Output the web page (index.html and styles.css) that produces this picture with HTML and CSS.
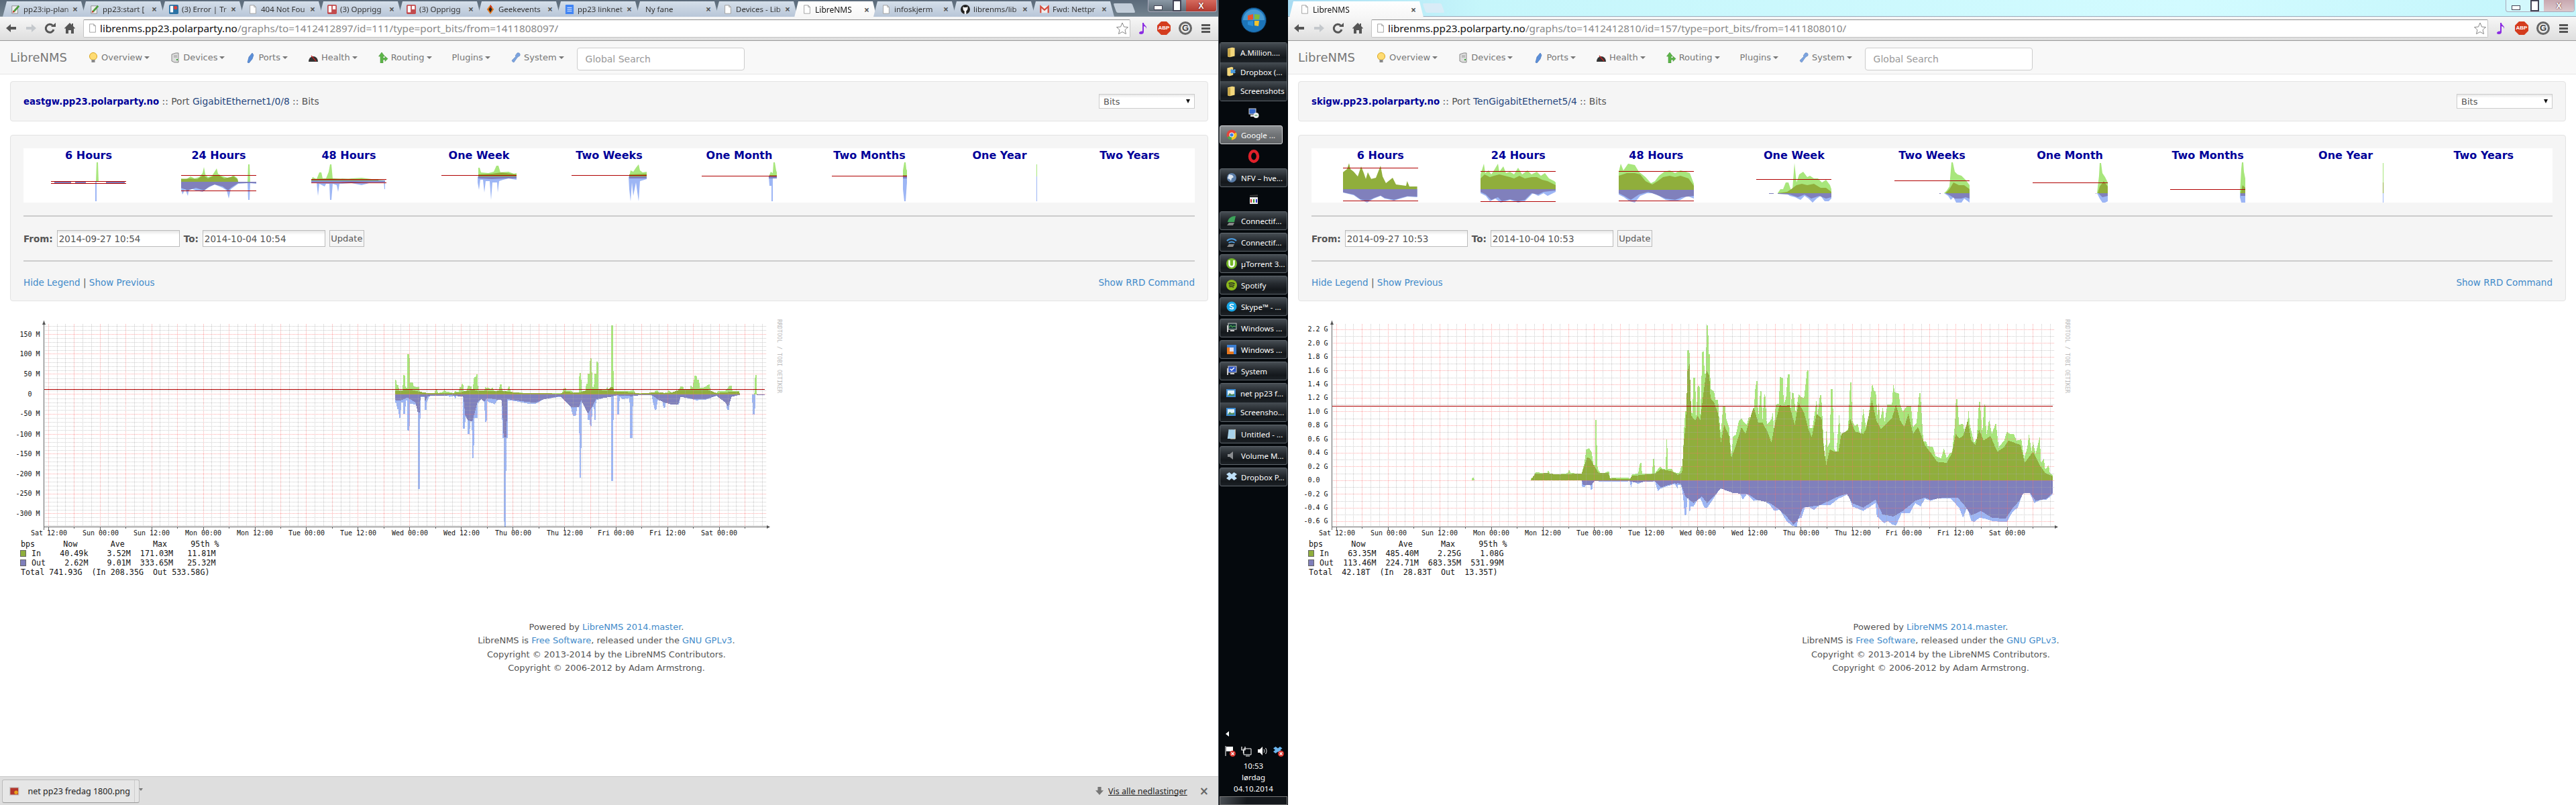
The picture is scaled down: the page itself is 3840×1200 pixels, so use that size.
FILE: index.html
```html
<!DOCTYPE html>
<html>
<head>
    <title>LibreNMS</title>
    <meta charset="utf-8">
    <link rel="stylesheet" href="styles.css">
</head>
<body>
<svg class="defs" width="0" height="0">
    <defs>
        <symbol id="i-page" viewBox="0 0 16 16"><path d="M3 1h7l3 3v11H3z" fill="#fff" stroke="#999"/><path d="M10 1v3h3" fill="none" stroke="#999"/></symbol>
        <symbol id="i-wiki" viewBox="0 0 16 16"><path d="M2 2h10v13H2z" fill="#eee" stroke="#888"/><path d="M5 12L14 2" stroke="#4d9c3c" stroke-width="3"/><path d="M3 14l1-4 3 2z" fill="#c8352b"/></symbol>
        <symbol id="i-trello" viewBox="0 0 16 16"><rect width="16" height="16" rx="2" fill="#2c72a4"/><rect x="2" y="2" width="5" height="11" fill="#fff"/><circle cx="11" cy="5" r="3" fill="#d9413a"/></symbol>
        <symbol id="i-trellored" viewBox="0 0 16 16"><rect width="16" height="16" rx="2" fill="#c24a4d"/><rect x="2" y="2" width="5" height="11" fill="#fff"/><rect x="9" y="2" width="5" height="6" fill="#fff"/></symbol>
        <symbol id="i-geek" viewBox="0 0 16 16"><path d="M8 0l6 8-6 8-6-8z" fill="#e8791c"/><path d="M8 3l3 5-3 5-3-5z" fill="#222"/><path d="M8 0l3 4-3 2z" fill="#c8281e"/></symbol>
        <symbol id="i-gdoc" viewBox="0 0 16 16"><rect x="1" width="14" height="16" rx="1" fill="#4285f4"/><path d="M4 5h8M4 8h8M4 11h8" stroke="#fff"/></symbol>
        <symbol id="i-github" viewBox="0 0 16 16"><circle cx="8" cy="8" r="8" fill="#222"/><path d="M4 3l2 1.500h4L12 3v4.500L10.500 10l-1 .5V16h-3v-5.500L5 10 4 7.500z" fill="#fff"/></symbol>
        <symbol id="i-gmail" viewBox="0 0 16 16"><path d="M1 2h14v12H1z" fill="#eee"/><path d="M1.500 14V3l6.500 6 6.500-6v11" fill="none" stroke="#d64a3b" stroke-width="2.500"/></symbol>

        <symbol id="i-back" viewBox="0 0 18 18"><path d="M16 7H8V3L1 9l7 6v-4h8z" fill="#555"/></symbol>
        <symbol id="i-fwd" viewBox="0 0 18 18"><path d="M2 7h8V3l7 6-7 6v-4H2z" fill="#c4c8cc"/></symbol>
        <symbol id="i-reload" viewBox="0 0 18 18"><path d="M14 11a6 6 0 1 1-1.500-6" fill="none" stroke="#555" stroke-width="3"/><path d="M10 7h7V1z" fill="#555"/></symbol>
        <symbol id="i-home" viewBox="0 0 18 18"><path d="M9 1L1 9l1 1 1-1v8h4v-5h4v5h4V9l1 1 1-1-3-3V2h-2v2z" fill="#555"/></symbol>
        <symbol id="i-star" viewBox="0 0 18 18"><path d="M9 1l2.500 6 6 .500-4.500 4 1.500 6L9 14.500 3.500 17.500 5 11.500.5 7.500l6-.5z" fill="#fff" stroke="#888"/></symbol>
        <symbol id="i-note" viewBox="0 0 18 18"><path d="M8 1h2c0 4 5 4 4 9-.5-3-2-3.500-4-4v9c0 2-2 3-4 3s-3-1-3-2 2-3 5-2.500z" fill="#8a2be2"/></symbol>

        <symbol id="i-bulb" viewBox="0 0 16 16"><circle cx="8" cy="6" r="5.500" fill="#ffdc73" stroke="#d9a520"/><rect x="5.500" y="11" width="5" height="4" fill="#888"/></symbol>
        <symbol id="i-server" viewBox="0 0 16 16"><path d="M3 3l6-2h4v14H7l-4-2z" fill="#ddd" stroke="#888"/><path d="M6 5h5M6 7h5" stroke="#999"/><rect x="10" y="10" width="2" height="2" fill="#3a3"/></symbol>
        <symbol id="i-plug" viewBox="0 0 16 16"><path d="M4 15L6 7l5-6 2 3-2 6-5 6z" fill="#5b8fd9" stroke="#3e6cb0" stroke-width=".6"/></symbol>
        <symbol id="i-health" viewBox="0 0 16 16"><path d="M1 14a7 8 0 0 1 14 0z" fill="#333"/><path d="M5 5l7 8" stroke="#c22" stroke-width="1.200"/></symbol>
        <symbol id="i-route" viewBox="0 0 16 16"><path d="M6 0L1.500 6H4v10h4v-5h3v2.500L15 9.500 11 6v2.500H8V6h2.500z" fill="#5cb548" stroke="#3c8a2c" stroke-width=".5"/></symbol>
        <symbol id="i-wrench" viewBox="0 0 16 16"><path d="M10 1c3-1 5 1 4 4l-3 2-1 1-5 7-2-1-1-2 6-6-1-1z" fill="#7ba3de" stroke="#5a7fb8" stroke-width=".5"/></symbol>

        <symbol id="t-folder" viewBox="0 0 16 20"><path d="M2 3l8-2 5 1v15l-9 2-4-1z" fill="#f3d77c"/><path d="M2 3l5 1v15l-5-2z" fill="#c9a84a"/></symbol>
        <symbol id="t-dropfolder" viewBox="0 0 16 20"><path d="M1 3l8-2 3 1v14l-7 2-4-1z" fill="#f3d77c"/><path d="M9 5l3 2 3-2 2 2-2 2 2 2-3 2-2-1-3 1-2-2 1-2-1-2z" fill="#4a9be0"/></symbol>
        <symbol id="t-remote" viewBox="0 0 16 16"><rect x="1" y="1" width="10" height="8" fill="#3467c8" stroke="#ccc"/><path d="M3 10h6v3H3z" fill="#ccc"/><circle cx="11.500" cy="11" r="4" fill="#eee"/><path d="M9.500 11h4" stroke="#393"/></symbol>
        <symbol id="t-chrome" viewBox="0 0 16 16"><circle cx="8" cy="8" r="7.500" fill="#e5443a"/><path d="M8 8L1.500 11.500A7.500 7.500 0 0 0 8 15.500z" fill="#4aa84e"/><path d="M8 8v7.500a7.500 7.500 0 0 0 6.800-11z" fill="#f5c51e"/><circle cx="8" cy="8" r="3.500" fill="#fff"/><circle cx="8" cy="8" r="2.600" fill="#3d7fe6"/></symbol>
        <symbol id="t-opera" viewBox="0 0 16 20"><ellipse cx="8" cy="10" rx="5.500" ry="7" fill="none" stroke="#e0202a" stroke-width="4"/></symbol>
        <symbol id="t-globe" viewBox="0 0 16 16"><circle cx="8" cy="8" r="7" fill="#5a7da8"/><path d="M4 3l5 1 2 3-3 2-1 4-2-3-3-1z" fill="#dde6f0"/></symbol>
        <symbol id="t-clap" viewBox="0 0 16 16"><rect x="2" y="5" width="12" height="10" fill="#eee"/><path d="M2 2l12-1v3H2z" fill="#333"/><path d="M4 8v5" stroke="#c33" stroke-width="2"/><path d="M8 8v5" stroke="#393" stroke-width="2"/><path d="M12 8v5" stroke="#33c" stroke-width="2"/></symbol>
        <symbol id="t-fan" viewBox="0 0 16 16"><path d="M2 10C3 4 8 1 14 1l-2 9z" fill="#3da35a"/><path d="M1 15l3-4h8l-2 4z" fill="#888"/></symbol>
        <symbol id="t-wifi" viewBox="0 0 16 16"><path d="M1 6c4-4 10-4 14 0M3.500 9c3-2 6-2 9 0" fill="none" stroke="#4a9be0" stroke-width="2"/><path d="M1 15l3-4h8l-2 4z" fill="#888"/></symbol>
        <symbol id="t-utorrent" viewBox="0 0 16 16"><circle cx="8" cy="8" r="8" fill="#76b82a"/><path d="M4.500 3v6a3.500 3.500 0 0 0 7 0V3" fill="none" stroke="#fff" stroke-width="2.500"/></symbol>
        <symbol id="t-spotify" viewBox="0 0 16 16"><circle cx="8" cy="8" r="8" fill="#8cb81c"/><path d="M3.500 5.500c3-1 6-1 9 .5M4 8c3-.8 5-.6 8 .5M4.500 10.500c2-.5 4.500-.4 6.500.5" fill="none" stroke="#222" stroke-width="1.400"/></symbol>
        <symbol id="t-skype" viewBox="0 0 16 16"><circle cx="8" cy="8" r="7.500" fill="#1aa8e8"/><path d="M11 5.500C10 4 6 4 5.500 6c-.5 2.500 5 1.500 5 4 0 2-4.500 2-5.500 0" fill="none" stroke="#fff" stroke-width="1.600"/></symbol>
        <symbol id="t-monitor" viewBox="0 0 16 16"><rect x="3" y="1" width="12" height="9" fill="#1a3a3a" stroke="#ccc"/><path d="M4 7l3-3 2 3 2-2 3 1" fill="none" stroke="#5c5"/><path d="M6 11h6v2H6zM1 4h2v10H1z" fill="#ccc"/></symbol>
        <symbol id="t-vm" viewBox="0 0 16 16"><rect x="1" y="1" width="14" height="14" fill="#3c7ed0"/><rect x="1" y="5" width="10" height="10" fill="#e8781e"/><rect x="5" y="5" width="6" height="6" fill="#dde"/></symbol>
        <symbol id="t-system" viewBox="0 0 16 16"><rect x="3" y="1" width="12" height="9" fill="#2c55c8" stroke="#ccc"/><path d="M6 5l2 2 4-4" fill="none" stroke="#fff" stroke-width="1.500"/><path d="M6 11h6v2H6zM1 4h2v10H1z" fill="#ccc"/></symbol>
        <symbol id="t-image" viewBox="0 0 16 16"><rect x="1" y="2" width="14" height="12" fill="#3c8ad0"/><rect x="3" y="4" width="10" height="8" fill="#dff0f8"/><path d="M3 12l3-4 3 2 4-1v3z" fill="#4c8a5a"/></symbol>
        <symbol id="t-notepad" viewBox="0 0 16 18"><path d="M3 1h11v16H1z" fill="#a9d3ea"/><path d="M4 1h10" stroke="#555" stroke-dasharray="1 1" stroke-width="2"/><path d="M14 1v16H6" fill="none" stroke="#e6d9b8"/></symbol>
        <symbol id="t-speaker" viewBox="0 0 16 16"><path d="M2 6h3l5-4v12l-5-4H2z" fill="#8a8d90"/></symbol>
        <symbol id="t-dropbox" viewBox="0 0 16 16"><path d="M4.500 1L0 4l3.500 3L0 10l4.500 3L8 10l3.500 3 4.500-3-3.500-3L16 4l-4.500-3L8 4z" fill="#bfe0f8"/></symbol>
        <symbol id="t-flag" viewBox="0 0 16 16"><path d="M1 0v15" stroke="#fff"/><path d="M2 1h10v7H2z" fill="#fff"/><circle cx="11.500" cy="11.500" r="4.500" fill="#d9332b"/><path d="M9.500 9.500l4 4m0-4l-4 4" stroke="#fff" stroke-width="1.200"/></symbol>
        <symbol id="t-net" viewBox="0 0 16 16"><path d="M4 4h11v9H4z" fill="none" stroke="#fff"/><path d="M7 15h6" stroke="#fff"/><path d="M1 1v5h5V1M3.500 6v5" fill="none" stroke="#fff" stroke-width="1.200"/></symbol>
        <symbol id="t-vol" viewBox="0 0 16 16"><path d="M1 5h3l4-4v13l-4-4H1z" fill="#fff"/><path d="M10 5c1 2 1 3 0 5M12.500 3c2 3 2 6 0 9" fill="none" stroke="#fff"/></symbol>
        <symbol id="t-dropx" viewBox="0 0 16 16"><path d="M3.500 1L0 3.500l3 2.500-3 2.500L3.500 11 7 8.500 10 11l3.500-2.500-3-2.500 3-2.500L10 1 7 3.500z" fill="#6cb6ee"/><circle cx="11.500" cy="11.500" r="4.500" fill="#d9332b"/><path d="M9.500 9.500l4 4m0-4l-4 4" stroke="#fff" stroke-width="1.200"/></symbol>

        <g id="rrd-vgrid">
            <path class="grid-minor" d="M85.500 483v302M97.500 483v302M123.500 483v302M136.500 483v302M161.500 483v302M174.500 483v302M200.500 483v302M213.500 483v302M238.500 483v302M251.500 483v302M277.500 483v302M290.500 483v302M315.500 483v302M328.500 483v302M354.500 483v302M367.500 483v302M392.500 483v302M405.500 483v302M431.500 483v302M444.500 483v302M469.500 483v302M482.500 483v302M508.500 483v302M521.500 483v302M546.500 483v302M559.500 483v302M585.500 483v302M597.500 483v302M623.500 483v302M636.500 483v302M662.500 483v302M674.500 483v302M700.500 483v302M713.500 483v302M739.500 483v302M751.500 483v302M777.500 483v302M790.500 483v302M815.500 483v302M828.500 483v302M854.500 483v302M867.500 483v302M892.500 483v302M905.500 483v302M931.500 483v302M944.500 483v302M969.500 483v302M982.500 483v302M1008.500 483v302M1021.500 483v302M1046.500 483v302M1059.500 483v302M1085.500 483v302M1097.500 483v302M1123.500 483v302M1136.500 483v302"/>
            <path class="grid-major" d="M72.500 483v302M110.500 483v302M149.500 483v302M187.500 483v302M226.500 483v302M264.500 483v302M303.500 483v302M341.500 483v302M380.500 483v302M418.500 483v302M456.500 483v302M495.500 483v302M533.500 483v302M572.500 483v302M610.500 483v302M649.500 483v302M687.500 483v302M726.500 483v302M764.500 483v302M803.500 483v302M841.500 483v302M880.500 483v302M918.500 483v302M956.500 483v302M995.500 483v302M1033.500 483v302M1072.500 483v302M1110.500 483v302"/>
        </g>
        <g id="rrd-xaxis">
            <path class="axis" d="M65.500 478v312M65 785.500h1078M72.500 785v5M110.500 785v3M149.500 785v5M187.500 785v3M226.500 785v5M264.500 785v3M303.500 785v5M341.500 785v3M380.500 785v5M418.500 785v3M456.500 785v5M495.500 785v3M533.500 785v5M572.500 785v3M610.500 785v5M649.500 785v3M687.500 785v5M726.500 785v3M764.500 785v5M803.500 785v3M841.500 785v5M880.500 785v3M918.500 785v5M956.500 785v3M995.500 785v5M1033.500 785v3M1072.500 785v5M1110.500 785v3"/>
            <path class="arrow" d="M63 484l2.500-6 2.500 6zM1143 783l5 2.500-5 2.500z"/>
        </g>
    </defs>
</svg>

<!-- venstre vindu -->
<section class="window left">
    <div class="strip">
        <div class="tab"><svg class="fav"><use href="#i-wiki"/></svg><span class="tab-title">pp23:ip-plan</span><i class="tab-x">×</i></div>
        <div class="tab"><svg class="fav"><use href="#i-wiki"/></svg><span class="tab-title">pp23:start [</span><i class="tab-x">×</i></div>
        <div class="tab"><svg class="fav"><use href="#i-trello"/></svg><span class="tab-title">(3) Error | Tr</span><i class="tab-x">×</i></div>
        <div class="tab"><svg class="fav"><use href="#i-page"/></svg><span class="tab-title">404 Not Fou</span><i class="tab-x">×</i></div>
        <div class="tab"><svg class="fav"><use href="#i-trellored"/></svg><span class="tab-title">(3) Opprigg</span><i class="tab-x">×</i></div>
        <div class="tab"><svg class="fav"><use href="#i-trellored"/></svg><span class="tab-title">(3) Opprigg</span><i class="tab-x">×</i></div>
        <div class="tab"><svg class="fav"><use href="#i-geek"/></svg><span class="tab-title">Geekevents</span><i class="tab-x">×</i></div>
        <div class="tab"><svg class="fav"><use href="#i-gdoc"/></svg><span class="tab-title">pp23 linknet</span><i class="tab-x">×</i></div>
        <div class="tab no-icon"><span class="tab-title">Ny fane</span><i class="tab-x">×</i></div>
        <div class="tab"><svg class="fav"><use href="#i-page"/></svg><span class="tab-title">Devices - Lib</span><i class="tab-x">×</i></div>
        <div class="tab active"><svg class="fav"><use href="#i-page"/></svg><span class="tab-title">LibreNMS</span><i class="tab-x">×</i></div>
        <div class="tab"><svg class="fav"><use href="#i-page"/></svg><span class="tab-title">infoskjerm</span><i class="tab-x">×</i></div>
        <div class="tab"><svg class="fav"><use href="#i-github"/></svg><span class="tab-title">librenms/lib</span><i class="tab-x">×</i></div>
        <div class="tab"><svg class="fav"><use href="#i-gmail"/></svg><span class="tab-title">Fwd: Nettpr</span><i class="tab-x">×</i></div>
        <div class="new-tab"></div>
        <div class="win-ctl"><span class="ctl-min"></span><span class="ctl-max"></span><span class="ctl-close">X</span></div>
    </div>
    <div class="toolbar">
        <svg class="tool"><use href="#i-back"/></svg>
        <svg class="tool"><use href="#i-fwd"/></svg>
        <svg class="tool"><use href="#i-reload"/></svg>
        <svg class="tool"><use href="#i-home"/></svg>
        <div class="omnibox">
            <svg class="fav"><use href="#i-page"/></svg>
            <span class="url"><b>librenms.pp23.polarparty.no</b>/graphs/to=1412412897/id=111/type=port_bits/from=1411808097/</span>
            <svg class="star"><use href="#i-star"/></svg>
        </div>
        <div class="ext">
            <svg class="tool"><use href="#i-note"/></svg>
            <span class="abp">ABP</span>
            <span class="gee">G</span>
            <span class="menu"></span>
        </div>
    </div>
    <main class="page">
        <nav class="navbar">
            <span class="brand">LibreNMS</span>
            <span class="nav-item"><svg class="nav-icon"><use href="#i-bulb"/></svg>Overview<i class="caret"></i></span>
            <span class="nav-item"><svg class="nav-icon"><use href="#i-server"/></svg>Devices<i class="caret"></i></span>
            <span class="nav-item"><svg class="nav-icon"><use href="#i-plug"/></svg>Ports<i class="caret"></i></span>
            <span class="nav-item"><svg class="nav-icon"><use href="#i-health"/></svg>Health<i class="caret"></i></span>
            <span class="nav-item"><svg class="nav-icon"><use href="#i-route"/></svg>Routing<i class="caret"></i></span>
            <span class="nav-item">Plugins<i class="caret"></i></span>
            <span class="nav-item"><svg class="nav-icon"><use href="#i-wrench"/></svg>System<i class="caret"></i></span>
            <div class="search">Global Search</div>
        </nav>
        <div class="panel heading">
            <div><a class="host">eastgw.pp23.polarparty.no</a> :: Port <a class="iface">GigabitEthernet1/0/8</a> :: Bits</div>
            <div class="select">Bits<i class="select-arrow"></i></div>
        </div>
        <div class="panel controls">
            <div class="thumbs">
                <div class="thumb"><a>6 Hours</a>
                    <svg class="spark" viewBox="0 0 112 60"><path class="in-max" d="M67 29L68 0H70L71 29z"/><path class="out-max" d="M66 29V58H68V29z"/><path class="out-avg" d="M5 29V32H30V29zM36 29V31H52V29zM82 29V32H110V29z"/><path class="pct" d="M0 28H112M0 31H112"/></svg></div>
                <div class="thumb"><a>24 Hours</a>
                    <svg class="spark" viewBox="0 0 112 60"><path class="in-max" d="M0 29V24L8 25 14 21 20 24 27 22 32 16 34 7 36 18 40 22 46 20 50 14 53 9 55 17 60 20 66 22 72 24 78 19 84 24 85 29zM99 29L100 3H102L103 29z"/><path class="in-avg" d="M0 29V25L14 24 24 25 33 19 40 24 50 19 56 19 64 24 78 21 84 25 85 29z"/><path class="out-max" d="M0 29V40L2 48 6 40 10 50 12 38 22 42 32 44 40 38 50 33 62 38 68 42 71 54 74 40 85 32 99 31 100 56H102L103 31 112 32V29z"/><path class="out-avg" d="M0 29V38L10 42 22 38 34 42 42 36 50 33 62 36 70 42 74 38 85 31 112 31V29z"/><path class="pct" d="M0 19H112M0 42H112"/></svg></div>
                <div class="thumb"><a>48 Hours</a>
                    <svg class="spark" viewBox="0 0 112 60"><path class="in-max" d="M0 27L2 22 8 25 12 15 15 15 17 24 22 24 26 14 28 3 30 3 32 25 50 26 60 24 75 23 90 25 110 27z"/><path class="in-avg" d="M0 27V25L30 24 70 25 100 26 100 27z"/><path class="out-max" d="M0 27V30L8 30 10 50 12 32 20 36 22 32 27 32 28 56 30 56 32 32 38 34 40 44 42 32 60 31 75 34 90 30 108 30V27zM108 27L109 40H110V27z"/><path class="out-avg" d="M0 27V29H40L60 30 90 29 110 29V27z"/><path class="pct" d="M0 25H112M0 30H112"/></svg></div>
                <div class="thumb"><a>One Week</a>
                    <svg class="spark" viewBox="0 0 112 60"><path class="in-max" d="M55 21V8H57L59 15 70 16 78 14 82 5H85L88 15 100 14 108 17 112 16V21z"/><path class="in-avg" d="M55 21V18L75 17 90 15 112 18V21z"/><path class="out-max" d="M54 21V30L56 41 58 26 62 26 64 45 66 28 72 28 74 56 76 30 83 30 84 45 86 28 92 26 100 24 112 26V21z"/><path class="out-avg" d="M55 21V24L75 25 100 24 112 24V21z"/><path class="pct" d="M0 19H112"/></svg></div>
                <div class="thumb"><a>Two Weeks</a>
                    <svg class="spark" viewBox="0 0 112 60"><path class="in-max" d="M86 21L88 12 92 14 96 8 100 3 102 12 106 15 112 14V21z"/><path class="in-avg" d="M86 21V18L112 17V21z"/><path class="out-max" d="M85 21L86 40 88 58 90 30 92 50 96 30 100 58 102 28 112 25V21z"/><path class="out-avg" d="M86 21V24H112V21z"/><path class="pct" d="M0 19H112"/></svg></div>
                <div class="thumb"><a>One Month</a>
                    <svg class="spark" viewBox="0 0 112 60"><path class="in-max" d="M100 21L103 14 106 16 107 0H109L111 12 112 15V21z"/><path class="in-avg" d="M101 21V19H112V21z"/><path class="out-max" d="M100 21L101 35 104 35V58H106V48 108 48 110 40 112 25V21z"/><path class="out-avg" d="M100 21V24H112V21z"/><path class="pct" d="M0 20H112"/></svg></div>
                <div class="thumb"><a>Two Months</a>
                    <svg class="spark" viewBox="0 0 112 60"><path class="in-max" d="M106 21V12L108 0H110L111 10 112 12V21z"/><path class="in-avg" d="M106 21V19H112V21z"/><path class="out-max" d="M106 21V40L108 58H110L112 30V21z"/><path class="out-avg" d="M106 21V24H112V21z"/><path class="pct" d="M0 20H112"/></svg></div>
                <div class="thumb"><a>One Year</a>
                    <svg class="spark" viewBox="0 0 112 60"><path class="in-max" d="M111 21V3H112V21z"/><path class="out-max" d="M111 21V58H112V21z"/></svg></div>
                <div class="thumb"><a>Two Years</a></div>
            </div>
            <hr>
            <form class="range">
                <label>From:</label><input class="date" value="2014-09-27 10:54">
                <label>To:</label><input class="date" value="2014-10-04 10:54">
                <span class="update">Update</span>
            </form>
            <hr>
            <div class="links">
                <span><a>Hide Legend</a> | <a>Show Previous</a></span>
                <a>Show RRD Command</a>
            </div>
        </div>
        <svg class="rrd" viewBox="0 470 1180 400">
            <g class="areas" transform="translate(550 460) scale(.408 .3333)">
                <polygon class="in-max" points="95,383 95,318 101,322 101,340 108,342 111,372 123,372 125,298 131,298 134,355 140,355 140,203 148,203 150,330 160,330 162,345 172,352 182,348 186,372 215,378 240,378 243,362 250,362 252,378 272,372 275,356 280,370 310,378 314,370 328,372 332,352 338,352 340,336 344,336 346,372 358,372 360,345 374,347 378,372 384,308 390,306 393,293 397,293 399,370 422,370 424,352 436,354 446,360 452,352 458,370 475,370 478,340 485,340 488,370 505,370 510,347 514,347 517,372 545,376 600,378 660,380 705,378 712,356 718,355 722,365 742,368 748,378 766,378 769,287 775,287 777,370 790,370 794,335 798,335 800,290 806,290 808,222 814,222 816,350 822,350 824,292 830,290 832,238 837,238 838,360 868,360 870,348 876,360 884,360 886,76 892,76 894,368 930,368 950,370 965,364 975,378 1000,378 1040,380 1048,365 1055,365 1060,378 1090,376 1095,365 1105,375 1130,372 1138,349 1148,349 1152,368 1172,368 1176,340 1182,355 1190,300 1197,300 1200,318 1206,318 1209,355 1225,352 1240,340 1245,340 1248,372 1270,378 1275,368 1300,370 1318,345 1325,345 1328,370 1352,370 1356,383 1408,383 1411,298 1416,298 1418,383"/>
                <polygon class="in-avg" points="95,383 97,365 125,365 130,360 150,362 185,372 215,378 275,378 330,376 360,366 380,362 395,368 420,366 450,370 480,366 510,372 560,378 700,380 715,370 745,375 770,376 800,362 830,360 868,368 886,350 892,350 896,372 960,374 990,380 1050,374 1090,378 1110,374 1135,362 1180,362 1210,360 1235,362 1270,378 1300,374 1352,372 1356,383"/>
                <polygon class="out-max" points="95,383 95,420 100,422 103,450 108,450 110,488 115,488 118,420 124,420 126,470 132,470 135,410 140,410 141,545 148,545 150,425 172,430 178,460 180,460 180,808 186,808 188,395 203,395 203,452 210,452 212,420 220,390 240,388 280,385 296,395 310,390 316,404 320,390 344,395 344,538 351,538 354,420 360,420 360,562 368,562 370,505 376,505 377,668 383,668 385,488 396,488 398,425 410,405 422,420 424,508 430,508 432,415 460,428 472,405 485,410 488,578 492,578 494,975 500,975 502,578 507,578 508,410 540,415 580,425 610,425 640,405 700,395 730,400 745,480 756,480 762,432 768,432 769,755 775,755 777,420 797,420 799,498 806,498 808,525 814,525 816,440 822,440 824,498 828,498 830,410 884,390 884,772 892,772 894,388 907,390 908,473 914,473 916,392 925,405 952,400 954,578 963,578 965,390 1000,385 1032,385 1044,452 1050,452 1056,405 1072,412 1076,443 1082,443 1088,400 1105,400 1107,430 1133,428 1138,395 1180,405 1195,410 1230,408 1270,390 1305,420 1308,452 1316,452 1320,395 1356,385 1400,385 1402,473 1410,473 1412,385 1445,388 1445,383"/>
                <polygon class="out-avg" points="95,383 97,410 118,410 140,398 170,420 178,462 186,465 188,392 203,392 205,415 215,392 300,388 345,395 352,480 362,500 378,505 396,420 410,405 422,415 432,400 485,410 488,460 492,575 502,575 506,405 580,418 610,420 640,405 700,392 738,440 768,440 775,410 800,470 815,440 830,405 884,395 890,392 905,388 960,392 1000,386 1032,386 1060,410 1080,420 1108,430 1130,428 1138,395 1190,405 1230,405 1270,390 1300,418 1312,440 1325,395 1356,385 1400,384 1445,388 1445,383"/>
            </g>
            <use href="#rrd-vgrid"/>
            <path class="grid-minor" d="M65 486.500h1078M65 492.500h1078M65 504.500h1078M65 510.500h1078M65 516.500h1078M65 522.500h1078M65 534.500h1078M65 540.500h1078M65 546.500h1078M65 552.500h1078M65 564.500h1078M65 570.500h1078M65 576.500h1078M65 582.500h1078M65 594.500h1078M65 600.500h1078M65 605.500h1078M65 611.500h1078M65 623.500h1078M65 629.500h1078M65 635.500h1078M65 641.500h1078M65 653.500h1078M65 659.500h1078M65 665.500h1078M65 671.500h1078M65 682.500h1078M65 688.500h1078M65 694.500h1078M65 700.500h1078M65 712.500h1078M65 718.500h1078M65 724.500h1078M65 730.500h1078M65 742.500h1078M65 748.500h1078M65 754.500h1078M65 760.500h1078M65 771.500h1078M65 777.500h1078M65 783.500h1078"/>
            <path class="grid-major" d="M65 498.500h1078M65 527.500h1078M65 557.500h1078M65 587.500h1078M65 617.500h1078M65 647.500h1078M65 676.500h1078M65 706.500h1078M65 736.500h1078M65 765.500h1078"/>
            <path class="pct" d="M65 580.500H1140"/>
            <use href="#rrd-xaxis"/>
            <g class="rrd-y">
                <text x="59.500" y="501.500">150 M</text><text x="59.500" y="530.500">100 M</text><text x="59.500" y="561">50 M</text><text x="59.500" y="590.500">0  </text><text x="59.500" y="620">-50 M</text><text x="59.500" y="650.500">-100 M</text><text x="59.500" y="680">-150 M</text><text x="59.500" y="709.500">-200 M</text><text x="59.500" y="739">-250 M</text><text x="59.500" y="769">-300 M</text>
            </g>
            <g class="rrd-x">
                <text x="73" y="798">Sat 12:00</text><text x="150" y="798">Sun 00:00</text><text x="226" y="798">Sun 12:00</text><text x="303" y="798">Mon 00:00</text><text x="380" y="798">Mon 12:00</text><text x="457" y="798">Tue 00:00</text><text x="534" y="798">Tue 12:00</text><text x="611" y="798">Wed 00:00</text><text x="688" y="798">Wed 12:00</text><text x="765" y="798">Thu 00:00</text><text x="842" y="798">Thu 12:00</text><text x="918" y="798">Fri 00:00</text><text x="995" y="798">Fri 12:00</text><text x="1072" y="798">Sat 00:00</text>
            </g>
            <text class="rrd-credit" transform="rotate(90 1159 476)" x="1159" y="476">RRDTOOL / TOBI OETIKER</text>
            <g class="rrd-legend">
                <text x="31" y="815">bps      Now       Ave      Max     95th %</text>
                <rect class="swatch-in" x="30.500" y="820.500" width="8" height="9"/>
                <text x="47" y="829">In    40.49k    3.52M  171.03M   11.81M</text>
                <rect class="swatch-out" x="30.500" y="834.500" width="8" height="9"/>
                <text x="47" y="843">Out    2.62M    9.01M  333.65M   25.32M</text>
                <text x="31" y="857">Total 741.93G  (In 208.35G  Out 533.58G)</text>
            </g>
        </svg>
        <footer class="credits">
            <div>Powered by <a>LibreNMS 2014.master</a>.</div>
            <div>LibreNMS is <a>Free Software</a>, released under the <a>GNU GPLv3</a>.</div>
            <div>Copyright © 2013-2014 by the LibreNMS Contributors.</div>
            <div>Copyright © 2006-2012 by Adam Armstrong.</div>
        </footer>
    </main>
    <div class="downloads">
        <div class="dl-chip">
            <svg class="dl-icon" viewBox="0 0 16 16"><rect width="16" height="14" y="1" fill="#ccc"/><rect x="1.500" y="2.500" width="13" height="11" fill="#b3342a"/><circle cx="11" cy="10" r="3" fill="#e8a21c"/></svg>
            <span class="dl-name">net pp23 fredag 1800.png</span>
            <i class="dl-caret"></i>
        </div>
        <svg class="dl-arrow" viewBox="0 0 14 14"><path d="M4 0h6v6h4l-7 8-7-8h4z" fill="#777"/></svg>
        <a class="dl-all">Vis alle nedlastinger</a>
        <span class="dl-close">×</span>
    </div>
</section>

<!-- oppgavelinje -->
<aside class="taskbar">
    <div class="orb"><svg viewBox="0 0 38 38" width="38" height="38"><circle cx="19" cy="19" r="18.500" fill="#1c74b8" stroke="#0d3050"/><path d="M3 19A16 16 0 0 1 35 19z" fill="#6cb8e8" opacity=".55"/><path d="M10 12l8-2v8l-8 1z" fill="#e8562a"/><path d="M20 10l8 1-1 7-7 0z" fill="#7fbb3a"/><path d="M10 21l8-1v8l-8-2z" fill="#2c8fd8"/><path d="M20 20l7 0-1 8-6-1z" fill="#f5c32c"/></svg></div>
    <div class="task-group three">
        <div class="task"><svg class="task-icon"><use href="#t-folder"/></svg>A.Million....</div>
        <div class="task"><svg class="task-icon"><use href="#t-dropfolder"/></svg>Dropbox (...</div>
        <div class="task"><svg class="task-icon"><use href="#t-folder"/></svg>Screenshots</div>
    </div>
    <div class="task-solo"><svg class="task-icon"><use href="#t-remote"/></svg></div>
    <div class="task active"><svg class="task-icon"><use href="#t-chrome"/></svg>Google ...</div>
    <div class="task-solo opera"><svg class="task-icon"><use href="#t-opera"/></svg></div>
    <div class="task"><svg class="task-icon"><use href="#t-globe"/></svg>NFV – hve...</div>
    <div class="task-solo"><svg class="task-icon"><use href="#t-clap"/></svg></div>
    <div class="task"><svg class="task-icon"><use href="#t-fan"/></svg>Connectif...</div>
    <div class="task"><svg class="task-icon"><use href="#t-wifi"/></svg>Connectif...</div>
    <div class="task"><svg class="task-icon"><use href="#t-utorrent"/></svg>µTorrent 3...</div>
    <div class="task"><svg class="task-icon"><use href="#t-spotify"/></svg>Spotify</div>
    <div class="task"><svg class="task-icon"><use href="#t-skype"/></svg>Skype™ - ...</div>
    <div class="task"><svg class="task-icon"><use href="#t-monitor"/></svg>Windows ...</div>
    <div class="task"><svg class="task-icon"><use href="#t-vm"/></svg>Windows ...</div>
    <div class="task"><svg class="task-icon"><use href="#t-system"/></svg>System</div>
    <div class="task-group two">
        <div class="task"><svg class="task-icon"><use href="#t-image"/></svg>net pp23 f...</div>
        <div class="task"><svg class="task-icon"><use href="#t-image"/></svg>Screensho...</div>
    </div>
    <div class="task"><svg class="task-icon"><use href="#t-notepad"/></svg>Untitled - ...</div>
    <div class="task"><svg class="task-icon"><use href="#t-speaker"/></svg>Volume M...</div>
    <div class="task"><svg class="task-icon"><use href="#t-dropbox"/></svg>Dropbox P...</div>
    <div class="tray">
        <i class="tray-arrow"></i>
        <div class="tray-icons">
            <svg><use href="#t-flag"/></svg><svg><use href="#t-net"/></svg><svg><use href="#t-vol"/></svg><svg><use href="#t-dropx"/></svg>
        </div>
        <div class="clock">10:53<br>lørdag<br>04.10.2014</div>
        <div class="show-desktop"></div>
    </div>
</aside>

<!-- hoyre vindu -->
<section class="window right">
    <div class="strip">
        <div class="tab active wide"><svg class="fav"><use href="#i-page"/></svg><span class="tab-title">LibreNMS</span><i class="tab-x">×</i></div>
        <div class="new-tab"></div>
        <div class="win-ctl"><span class="ctl-min"></span><span class="ctl-max"></span><span class="ctl-close">X</span></div>
    </div>
    <div class="toolbar">
        <svg class="tool"><use href="#i-back"/></svg>
        <svg class="tool"><use href="#i-fwd"/></svg>
        <svg class="tool"><use href="#i-reload"/></svg>
        <svg class="tool"><use href="#i-home"/></svg>
        <div class="omnibox">
            <svg class="fav"><use href="#i-page"/></svg>
            <span class="url"><b>librenms.pp23.polarparty.no</b>/graphs/to=1412412810/id=157/type=port_bits/from=1411808010/</span>
            <svg class="star"><use href="#i-star"/></svg>
        </div>
        <div class="ext">
            <svg class="tool"><use href="#i-note"/></svg>
            <span class="abp">ABP</span>
            <span class="gee">G</span>
            <span class="menu"></span>
        </div>
    </div>
    <main class="page">
        <nav class="navbar">
            <span class="brand">LibreNMS</span>
            <span class="nav-item"><svg class="nav-icon"><use href="#i-bulb"/></svg>Overview<i class="caret"></i></span>
            <span class="nav-item"><svg class="nav-icon"><use href="#i-server"/></svg>Devices<i class="caret"></i></span>
            <span class="nav-item"><svg class="nav-icon"><use href="#i-plug"/></svg>Ports<i class="caret"></i></span>
            <span class="nav-item"><svg class="nav-icon"><use href="#i-health"/></svg>Health<i class="caret"></i></span>
            <span class="nav-item"><svg class="nav-icon"><use href="#i-route"/></svg>Routing<i class="caret"></i></span>
            <span class="nav-item">Plugins<i class="caret"></i></span>
            <span class="nav-item"><svg class="nav-icon"><use href="#i-wrench"/></svg>System<i class="caret"></i></span>
            <div class="search">Global Search</div>
        </nav>
        <div class="panel heading">
            <div><a class="host">skigw.pp23.polarparty.no</a> :: Port <a class="iface">TenGigabitEthernet5/4</a> :: Bits</div>
            <div class="select">Bits<i class="select-arrow"></i></div>
        </div>
        <div class="panel controls">
            <div class="thumbs">
                <div class="thumb"><a>6 Hours</a>
                    <svg class="spark" viewBox="0 0 112 60"><path class="in-avg" d="M0 40V14.700L6 10 9 1.300 11 10 16 14 22 21 27 6 31 16 34 24.700 37 14.700 42 24.700 49 23 56 5 59 21 64 31 74 23 79 33 94 35 95.600 28 99 36 110.600 36V40z"/><path class="out-max" d="M0 40V45L16 49 26 56 36 60 46 54 56 50 62 54 76 57 86 54 96 51 110.600 52V40z"/><path class="out-avg" d="M0 40V44.700L16 48 26 55 36 58 46 53 56 49.600 62 53 76 56 86 53 96 50.600 110.600 51V40z"/><path class="pct" d="M0 8H112M0 57H112"/></svg></div>
                <div class="thumb"><a>24 Hours</a>
                    <svg class="spark" viewBox="0 0 112 60"><path class="in-max" d="M0 40V18L5 2 7 16 12 12 16 18 20 12 26 2 28 14 34 6 38 16 44 14 50 18 56 8 62 18 70 12 76 18 84 14 90 20 96 16 102 24 110 28 112 30V40z"/><path class="in-avg" d="M0 40V24L6 18 14 22 20 20 28 18 36 20 44 22 50 24 58 20 66 24 76 22 84 22 92 26 100 28 112 34V40z"/><path class="out-max" d="M0 40V46L8 50 14 58 22 54 30 60 44 56 56 60 66 58 74 50 78 46 86 50 94 46 100 50 112 44V40z"/><path class="out-avg" d="M0 40V44L8 48 16 56 26 52 32 58 44 55 56 58 66 56 76 46 86 48 94 44 112 42V40z"/><path class="pct" d="M0 13H112M0 58H112"/></svg></div>
                <div class="thumb"><a>48 Hours</a>
                    <svg class="spark" viewBox="0 0 112 60"><path class="in-max" d="M0 41V14L3 2 7 12 14 2 24 4 30 14 40 22 48 31 54 28 60 20 68 14 76 12 84 16 92 12 100 14 106 16 112 32V41z"/><path class="in-avg" d="M0 41V20L12 16 24 16 32 18 40 28 50 33 58 28 66 22 76 20 84 22 92 20 104 24 112 35V41z"/><path class="out-max" d="M0 41V48L8 52 16 58 24 60 32 50 42 46 50 46 60 50 70 56 84 58 92 56 102 50 112 54V41z"/><path class="out-avg" d="M0 41V46L8 50 18 56 30 48 44 44 56 48 70 54 84 56 94 52 112 50V41z"/><path class="pct" d="M0 13H112M0 57H112"/></svg></div>
                <div class="thumb"><a>One Week</a>
                    <svg class="spark" viewBox="0 0 112 60"><path class="in-max" d="M32 46L36 40 40 40 44 30 48 30 52 42 54 40 57 1 60 30 64 18 70 14 76 22 80 20 86 24 92 24 98 30 104 26 110 34 112 40V46z"/><path class="in-avg" d="M32 46L46 44 52 40 60 34 68 32 76 34 86 32 96 38 104 38 112 44V46z"/><path class="out-max" d="M32 46V47L46 47 50 50 58 52 66 56 72 50 78 54 84 60 90 54 96 50 102 58 108 58 112 54V46z"/><path class="out-avg" d="M19 46V47H26V46zM32 46V47L50 48 62 52 72 48 82 54 94 50 104 54 112 52V46z"/><path class="pct" d="M0 25H112"/></svg></div>
                <div class="thumb"><a>Two Weeks</a>
                    <svg class="spark" viewBox="0 0 112 60"><path class="in-max" d="M74 46L78 42 82 36 85 0H87L90 14 94 18 100 20 106 26 112 34V46z"/><path class="in-avg" d="M76 46L82 40 88 30 96 34 104 34 112 40V46z"/><path class="out-max" d="M74 46L80 50 84 56 88 52 92 60 100 60 104 54 112 60V46z"/><path class="out-avg" d="M67 46V47H69V46zM76 46L84 50 90 54 100 54 106 52 112 54V46z"/><path class="pct" d="M0 27H112"/></svg></div>
                <div class="thumb"><a>One Month</a>
                    <svg class="spark" viewBox="0 0 112 60"><path class="in-max" d="M96 46L99 20 100 1H102L104 16 108 22 112 30V46z"/><path class="in-avg" d="M97 46L100 36 106 28 112 36V46z"/><path class="out-max" d="M96 46L100 54 104 60H108L112 58V46z"/><path class="out-avg" d="M94 46V47H95V46zM98 46L104 52 112 50V46z"/><path class="pct" d="M0 30H112"/></svg></div>
                <div class="thumb"><a>Two Months</a>
                    <svg class="spark" viewBox="0 0 112 60"><path class="in-max" d="M104 46L106 10 107 0H109L110 14 112 24V46z"/><path class="in-avg" d="M105 46L108 34 112 38V46z"/><path class="out-max" d="M104 46V52L106 60H112V46z"/><path class="out-avg" d="M105 46V50H112V46z"/><path class="pct" d="M0 40H112"/></svg></div>
                <div class="thumb"><a>One Year</a>
                    <svg class="spark" viewBox="0 0 112 60"><path class="in-max" d="M111 46V1H112V46z"/><path class="in-avg" d="M111 46V30H112V46z"/><path class="out-max" d="M111 46V60H112V46z"/></svg></div>
                <div class="thumb"><a>Two Years</a></div>
            </div>
            <hr>
            <form class="range">
                <label>From:</label><input class="date" value="2014-09-27 10:53">
                <label>To:</label><input class="date" value="2014-10-04 10:53">
                <span class="update">Update</span>
            </form>
            <hr>
            <div class="links">
                <span><a>Hide Legend</a> | <a>Show Previous</a></span>
                <a>Show RRD Command</a>
            </div>
        </div>
        <svg class="rrd" viewBox="0 470 1180 400">
            <g class="areas" transform="translate(0 460) scale(.4209 .3333)">
                <polygon class="in-max" points="650,767 653,755 658,755 660,767"/>
                <polygon class="in-max" points="860,767 862,755 870,758 876,733 890,733 895,735 918,735 922,723 928,738 950,742 990,736 996,720 1002,736 1040,738 1050,690 1056,630 1066,625 1075,640 1082,700 1088,700 1089,498 1093,498 1095,700 1100,725 1110,740 1130,730 1138,730 1140,758 1170,755 1200,755 1215,760 1218,742 1240,738 1247,690 1251,690 1254,738 1290,738 1293,672 1297,672 1300,735 1318,706 1325,715 1338,720 1340,585 1343,585 1345,716 1360,716 1365,730 1380,736 1380,767"/>
                <polygon class="in-avg" points="860,767 875,738 920,736 950,742 1040,738 1060,665 1070,670 1085,705 1100,735 1135,735 1140,760 1210,762 1220,748 1300,738 1320,718 1360,728 1380,740 1380,767"/>
                <polygon class="out-max" points="1040,767 1040,795 1050,800 1056,788 1070,790 1072,810 1078,808 1080,772 1180,775 1210,772 1215,800 1220,772 1240,785 1260,772 1300,775 1310,815 1320,805 1340,795 1355,790 1370,785 1380,805 1380,767"/>
                <polygon class="out-avg" points="582,767 582,768 742,768 742,767"/>
                <polygon class="out-avg" points="1040,767 1045,790 1075,790 1085,772 1210,772 1230,778 1300,772 1320,800 1370,780 1380,790 1380,767"/>
            </g>
            <g class="areas" transform="translate(580 460) scale(.408 .3333)">
                <polygon class="in-max" points="0,767 0,738 10,732 15,706 22,706 24,560 30,460 36,460 38,185 44,185 46,205 50,460 56,470 60,310 66,310 70,480 75,345 82,345 85,490 92,192 98,192 100,290 105,290 108,76 113,76 116,205 120,205 122,360 135,370 140,408 150,408 153,480 160,560 168,435 175,435 180,495 190,530 198,660 205,570 215,565 225,505 235,490 245,510 255,520 262,485 270,485 278,515 285,365 290,325 294,325 296,500 304,370 308,370 312,505 318,385 322,385 328,520 345,495 350,465 354,550 360,430 372,425 376,305 386,310 390,430 398,400 404,295 411,295 415,450 420,375 426,380 434,470 444,382 452,395 464,400 475,275 480,275 482,535 495,535 502,475 510,400 513,480 522,388 527,388 535,590 540,700 545,545 550,620 558,600 562,360 568,360 574,630 582,645 592,475 598,570 610,555 625,540 630,390 633,330 637,330 640,500 650,525 660,515 670,570 680,450 690,530 700,480 705,420 713,335 720,370 726,370 732,480 737,420 742,500 752,440 758,510 768,430 785,430 790,340 796,375 810,380 815,430 825,460 840,435 855,435 862,530 875,510 885,378 889,378 895,500 900,595 910,595 915,615 935,620 945,660 965,670 975,625 985,670 995,650 1005,640 1015,520 1019,405 1024,405 1030,520 1045,515 1055,590 1065,460 1070,520 1085,600 1095,580 1103,418 1107,418 1115,560 1122,430 1126,430 1130,570 1140,495 1150,560 1165,510 1175,620 1195,590 1205,550 1215,560 1230,560 1240,590 1258,585 1268,670 1280,620 1286,560 1295,640 1300,595 1310,650 1325,575 1330,690 1340,672 1345,720 1358,700 1362,735 1372,745 1372,767"/>
                <polygon class="in-avg" points="0,767 0,745 18,735 24,600 32,520 38,280 46,245 52,480 66,500 75,480 85,500 95,390 108,275 118,300 122,400 135,420 150,470 160,600 172,520 190,570 198,670 215,610 235,530 250,560 262,510 280,440 296,510 312,510 330,550 345,600 355,530 375,430 390,440 410,430 430,520 444,420 465,470 480,540 492,575 510,470 528,490 535,610 545,700 558,630 575,640 590,640 600,560 625,545 632,490 650,550 680,560 690,540 712,410 728,500 745,540 760,520 785,490 800,430 815,500 830,530 845,470 862,560 880,530 895,575 905,610 930,650 950,685 985,690 1005,645 1018,560 1030,580 1045,570 1062,500 1075,590 1090,610 1103,540 1120,590 1145,570 1170,640 1195,620 1210,590 1255,610 1270,690 1300,640 1325,700 1345,735 1372,750 1372,767"/>
                <polygon class="out-max" points="0,767 0,790 15,790 22,840 28,925 34,922 38,840 42,840 46,920 50,885 60,885 75,855 85,850 100,890 110,892 130,855 155,810 165,800 190,815 205,825 230,825 240,855 255,830 280,860 300,855 320,860 340,880 355,905 375,900 400,950 420,972 438,975 442,940 455,935 470,880 500,900 520,880 560,878 590,850 625,830 640,885 680,905 725,870 730,930 748,950 758,960 770,950 785,965 800,970 820,915 850,915 870,870 890,885 905,850 925,860 950,850 1000,850 1030,890 1045,935 1060,890 1075,950 1085,955 1105,935 1125,940 1150,950 1190,955 1205,955 1225,910 1245,890 1262,830 1285,815 1305,870 1330,855 1350,855 1372,830 1372,767"/>
                <polygon class="out-avg" points="0,767 0,780 15,785 30,840 60,870 90,840 110,870 130,845 160,805 205,825 260,830 290,855 340,870 370,895 400,930 425,965 440,950 460,890 490,885 520,880 590,840 620,828 640,870 680,890 725,855 750,920 790,930 825,905 870,860 905,845 925,855 980,845 1025,845 1050,880 1075,925 1110,905 1150,935 1200,940 1225,895 1250,860 1265,825 1290,825 1310,860 1350,850 1372,825 1372,767"/>
            </g>
            <use href="#rrd-vgrid"/>
            <path class="grid-minor" d="M65 501.500h1078M65 522.500h1078M65 542.500h1078M65 563.500h1078M65 583.500h1078M65 603.500h1078M65 624.500h1078M65 644.500h1078M65 665.500h1078M65 685.500h1078M65 706.500h1078M65 726.500h1078M65 747.500h1078M65 767.500h1078"/>
            <path class="grid-major" d="M65 491.500h1078M65 511.500h1078M65 532.500h1078M65 552.500h1078M65 573.500h1078M65 593.500h1078M65 613.500h1078M65 634.500h1078M65 654.500h1078M65 675.500h1078M65 695.500h1078M65 716.500h1078M65 736.500h1078M65 757.500h1078M65 777.500h1078"/>
            <path class="pct" d="M65 605.500H1140"/>
            <use href="#rrd-xaxis"/>
            <g class="rrd-y">
                <text x="59.500" y="494">2.2 G</text><text x="59.500" y="514.500">2.0 G</text><text x="59.500" y="534.500">1.8 G</text><text x="59.500" y="555.500">1.6 G</text><text x="59.500" y="575.500">1.4 G</text><text x="59.500" y="595.500">1.2 G</text><text x="59.500" y="616.500">1.0 G</text><text x="59.500" y="636.500">0.8 G</text><text x="59.500" y="657.500">0.6 G</text><text x="59.500" y="677.500">0.4 G</text><text x="59.500" y="698.500">0.2 G</text><text x="59.500" y="719">0.0  </text><text x="59.500" y="739.500">-0.2 G</text><text x="59.500" y="759.500">-0.4 G</text><text x="59.500" y="779.500">-0.6 G</text>
            </g>
            <g class="rrd-x">
                <text x="73" y="798">Sat 12:00</text><text x="150" y="798">Sun 00:00</text><text x="226" y="798">Sun 12:00</text><text x="303" y="798">Mon 00:00</text><text x="380" y="798">Mon 12:00</text><text x="457" y="798">Tue 00:00</text><text x="534" y="798">Tue 12:00</text><text x="611" y="798">Wed 00:00</text><text x="688" y="798">Wed 12:00</text><text x="765" y="798">Thu 00:00</text><text x="842" y="798">Thu 12:00</text><text x="918" y="798">Fri 00:00</text><text x="995" y="798">Fri 12:00</text><text x="1072" y="798">Sat 00:00</text>
            </g>
            <text class="rrd-credit" transform="rotate(90 1159 476)" x="1159" y="476">RRDTOOL / TOBI OETIKER</text>
            <g class="rrd-legend">
                <text x="31" y="815">bps      Now       Ave      Max     95th %</text>
                <rect class="swatch-in" x="30.500" y="820.500" width="8" height="9"/>
                <text x="47" y="829">In    63.35M  485.40M    2.25G    1.08G</text>
                <rect class="swatch-out" x="30.500" y="834.500" width="8" height="9"/>
                <text x="47" y="843">Out  113.46M  224.71M  683.35M  531.99M</text>
                <text x="31" y="857">Total  42.18T  (In  28.83T  Out  13.35T)</text>
            </g>
        </svg>
        <footer class="credits">
            <div>Powered by <a>LibreNMS 2014.master</a>.</div>
            <div>LibreNMS is <a>Free Software</a>, released under the <a>GNU GPLv3</a>.</div>
            <div>Copyright © 2013-2014 by the LibreNMS Contributors.</div>
            <div>Copyright © 2006-2012 by Adam Armstrong.</div>
        </footer>
    </main>
</section>
</body>
</html>
```
FILE: styles.css
```css
* {
    box-sizing: border-box;
}
html, body {
    margin: 0;
    height: 1200px;
    overflow: hidden;
}
body {
    display: flex;
    font-family: "DejaVu Sans", Verdana, sans-serif;
    font-size: 13px;
    color: #555;
    background: #fff;
}
.defs {
    position: absolute;
}
.window {
    display: flex;
    flex-direction: column;
    height: 1200px;
    overflow: hidden;
}
.window.left {
    width: 1816px;
}
.window.right {
    width: 1920px;
}

/* tab strip */
.strip {
    display: flex;
    height: 25px;
    padding: 2px 0 0 4px;
    flex: none;
    border-bottom: 1px solid #8b98a5;
}
.left .strip {
    background: linear-gradient(#5b6a7a, #73838f);
}
.right .strip {
    padding-left: 2px;
    background: linear-gradient(90deg, #a9dcf2, #c6f6fb 15%, #d2fbff 70%, #c3f5fb);
    border-bottom-color: #9ab;
}
.tab {
    display: flex;
    align-items: center;
    width: 123px;
    height: 23px;
    margin-right: -5px;
    padding: 0 10px 0 12px;
    font-family: "Noto Sans", sans-serif;
    font-size: 11.5px;
    color: #333;
    background: linear-gradient(#d5dfea, #b8c6d8);
    clip-path: polygon(0 100%, 6px 0, calc(100% - 6px) 0, 100% 100%);
}
.tab.active {
    background: linear-gradient(#fff, #f6f6f6);
    height: 24px;
    font-size: 12px;
    color: #111;
}
.tab.wide {
    width: 200px;
    padding-left: 16px;
}
.no-icon .tab-title {
    margin-left: 2px;
}
.fav {
    flex: none;
    width: 14px;
    height: 16px;
    margin-right: 5px;
}
.tab-title {
    flex: 1;
    min-width: 0;
    white-space: nowrap;
    -webkit-mask-image: linear-gradient(90deg, #000 85%, rgba(0, 0, 0, .35));
    mask-image: linear-gradient(90deg, #000 85%, rgba(0, 0, 0, .35));
}
.tab-x {
    flex: none;
    width: 10px;
    font-style: normal;
    font-weight: bold;
    font-size: 14px;
    color: #555;
    text-align: center;
}
.new-tab {
    width: 28px;
    height: 14px;
    margin: 3px 0 0 6px;
    background: rgba(225, 235, 245, .75);
    border-radius: 2px;
    transform: skewX(20deg);
}
.win-ctl {
    display: flex;
    margin: -2px 2px 0 auto;
    width: 103px;
    height: 18px;
    border: 1px solid #aab;
    border-top: 0;
    border-radius: 0 0 4px 4px;
    background: linear-gradient(#8b99a6, #5d6a76);
}
.right .win-ctl {
    background: rgba(255, 255, 255, .25);
}
.win-ctl span {
    display: flex;
    align-items: center;
    justify-content: center;
    width: 28px;
}
.ctl-min::after {
    content: "";
    width: 11px;
    height: 5px;
    margin-top: 6px;
    background: #fff;
    border: 1px solid #445;
}
.ctl-max::after {
    content: "";
    width: 9px;
    height: 13px;
    background: #fff;
    border: 2px solid #445;
}
.win-ctl .ctl-close {
    flex: 1;
    font: bold 12px "Liberation Sans", sans-serif;
    color: #fff;
    text-shadow: 0 0 2px #400;
    background: linear-gradient(#d56a5e, #b23a30);
    border-radius: 0 0 4px 0;
}
.right .win-ctl .ctl-close {
    background: linear-gradient(#c8a8b0, #dcc8cc);
}

/* toolbar */
.toolbar {
    display: flex;
    align-items: center;
    height: 36px;
    flex: none;
    padding: 0 0 1px 8px;
    background: linear-gradient(#f7f7f7, #dedede);
    border-bottom: 1px solid #9a9a9a;
}
.tool {
    flex: none;
    width: 18px;
    height: 18px;
    margin-right: 11px;
}
.omnibox {
    display: flex;
    align-items: center;
    flex: 1;
    height: 27px;
    padding: 0 2px 0 6px;
    background: #fff;
    border: 1px solid #c4c4c4;
    border-top-color: #8f8f8f;
    border-radius: 2px;
}
.omnibox .fav {
    margin-right: 4px;
}
.url {
    flex: 1;
    font-family: "Noto Sans", sans-serif;
    font-size: 15.300px;
    color: #888;
    white-space: nowrap;
}
.url b {
    font-weight: normal;
    color: #111;
}
.star {
    flex: none;
    width: 18px;
    height: 20px;
}
.ext {
    display: flex;
    align-items: center;
    flex: none;
    width: 131px;
    padding-left: 10px;
}
.ext .tool {
    margin-right: 12px;
}
.abp {
    flex: none;
    width: 20px;
    height: 20px;
    margin-right: 12px;
    font: bold 8px/20px "Liberation Sans", sans-serif;
    color: #fff;
    text-align: center;
    background: #d43c1e;
    clip-path: polygon(30% 0, 70% 0, 100% 30%, 100% 70%, 70% 100%, 30% 100%, 0 70%, 0 30%);
}
.gee {
    flex: none;
    width: 20px;
    height: 20px;
    margin-right: 14px;
    font: bold 13px/14px "Liberation Sans", sans-serif;
    color: #444;
    text-align: center;
    border: 3px solid #666;
    border-radius: 50%;
}
.menu {
    flex: none;
    width: 13px;
    height: 13px;
    border-top: 3px solid #555;
    border-bottom: 3px solid #555;
    position: relative;
}
.menu::after {
    content: "";
    position: absolute;
    left: 0;
    right: 0;
    top: 2px;
    height: 3px;
    background: #555;
}

/* page */
.page {
    flex: 1;
    min-height: 0;
}
.navbar {
    display: flex;
    align-items: center;
    gap: 30px;
    height: 50px;
    padding-left: 15px;
    background: #f8f8f8;
    border-bottom: 1px solid #e7e7e7;
}
.brand {
    font-size: 18px;
    color: #777;
    margin-right: 1px;
}
.nav-item {
    display: flex;
    align-items: center;
    color: #777;
}
.nav-icon {
    width: 16px;
    height: 16px;
    margin-right: 4px;
}
.caret {
    width: 0;
    height: 0;
    margin-left: 3px;
    border-top: 4px solid #777;
    border-left: 4px solid transparent;
    border-right: 4px solid transparent;
}
.search {
    width: 250px;
    height: 34px;
    margin: 4px 0 0 -11px;
    padding: 0 12px;
    font-size: 14px;
    line-height: 32px;
    color: #999;
    background: #fff;
    border: 1px solid #ccc;
    border-radius: 4px;
}
.panel {
    margin: 10px 15px 20px;
    background: #f5f5f5;
    border: 1px solid #e3e3e3;
    border-radius: 4px;
}
.panel.heading {
    display: flex;
    align-items: center;
    justify-content: space-between;
    height: 60px;
    padding: 0 19px;
    font-size: 13.800px;
}
.panel.controls {
    height: 248px;
    margin-top: 0;
    margin-bottom: 0;
    padding: 19px 19px 0;
}
.host {
    font-size: 13.300px;
    font-weight: bold;
    color: #000099;
}
.iface {
    color: #26477e;
}
.select {
    display: flex;
    align-items: center;
    justify-content: space-between;
    width: 143px;
    height: 22px;
    padding: 0 6px;
    font-size: 13px;
    color: #555;
    background: linear-gradient(#e8e8e8, #fff 5px);
    border: 1px solid #ccc;
}
.select-arrow {
    border-top: 6px solid #111;
    border-left: 3px solid transparent;
    border-right: 3px solid transparent;
}
.thumbs {
    display: grid;
    grid-template-columns: repeat(9, 1fr);
    height: 81px;
    background: #fff;
}
.thumb {
    text-align: center;
    font-size: 16px;
    line-height: 21px;
    font-weight: bold;
    color: #000099;
}
.spark {
    display: block;
    width: 112px;
    height: 60px;
    margin: 0 auto;
}
hr {
    height: 2px;
    margin: 0;
    border: 0;
    background: #ccc;
}
.thumbs + hr {
    margin-top: 19px;
}
.range {
    display: flex;
    align-items: center;
    height: 65px;
    margin: 0;
}
.range label {
    font-weight: bold;
    color: #555;
    margin-right: 6px;
    font-size: 13.500px;
}
.date {
    width: 183px;
    height: 25px;
    margin-right: 6px;
    padding: 0 2px;
    font: 13.500px "DejaVu Sans", sans-serif;
    color: #555;
    background: linear-gradient(#e6e6e6, #fff 6px);
    border: 1px solid #bbb;
}
.update {
    width: 52px;
    height: 25px;
    font-size: 13px;
    line-height: 23px;
    text-align: center;
    color: #555;
    background: #f5f5f5;
    border: 1px solid #bbb;
}
.links {
    display: flex;
    justify-content: space-between;
    margin-top: 23px;
    font-size: 13.500px;
    line-height: 16px;
}
.links a, .credits a {
    color: #428bca;
}
.rrd {
    display: block;
    width: 1180px;
    height: 400px;
    margin-top: 21px;
}
.credits {
    margin-top: 55px;
    text-align: center;
    line-height: 20.300px;
}
.left .credits {
    padding-right: 8px;
}
.right .credits {
    padding-right: 4px;
}
.downloads {
    display: flex;
    align-items: center;
    flex: none;
    height: 43px;
    padding: 0 14px 0 3px;
    background: #dedede;
    border-top: 1px solid #ccc;
}
.dl-chip {
    display: flex;
    align-items: center;
    width: 205px;
    height: 35px;
    padding-left: 10px;
    background: #e6e6e6;
    border: 1px solid #bbb;
    border-bottom-color: #999;
    border-radius: 3px;
}
.dl-icon {
    width: 15px;
    height: 15px;
    margin-right: 13px;
}
.dl-name {
    width: 153px;
    font-family: "Noto Sans", sans-serif;
    font-size: 12.500px;
    color: #222;
    white-space: nowrap;
}
.dl-caret {
    margin-left: 6px;
    padding-left: 6px;
    height: 33px;
    border-left: 1px solid #ccc;
    position: relative;
}
.dl-caret::after {
    content: "";
    position: absolute;
    left: 6px;
    top: 12px;
    border-top: 4px solid #777;
    border-left: 3px solid transparent;
    border-right: 3px solid transparent;
}
.dl-arrow {
    width: 12px;
    height: 12px;
    margin-left: auto;
}
.dl-all {
    margin-left: 7px;
    font-family: "Noto Sans", sans-serif;
    font-size: 12.500px;
    color: #222;
    text-decoration: underline;
    white-space: nowrap;
}
.dl-close {
    margin-left: 18px;
    font-size: 17px;
    font-weight: bold;
    color: #666;
}

/* rrd graph */
.areas polygon {
    shape-rendering: crispEdges;
}
.in-max {
    fill: #a8e67c;
}
.in-avg {
    fill: #90ae3c;
}
.out-max {
    fill: #9db6f5;
}
.out-avg {
    fill: #8080bc;
}
.pct {
    stroke: #b00000;
    fill: none;
    shape-rendering: crispEdges;
}
.grid-minor {
    stroke: rgba(170, 170, 170, .6);
    stroke-dasharray: 1 1;
    fill: none;
    shape-rendering: crispEdges;
}
.grid-major {
    stroke: rgba(255, 110, 110, .6);
    stroke-dasharray: 1 1;
    fill: none;
    shape-rendering: crispEdges;
}
.axis {
    stroke: #666;
    fill: none;
    shape-rendering: crispEdges;
}
.arrow {
    fill: #555;
}
.rrd text {
    font-family: "DejaVu Sans Mono", monospace;
    white-space: pre;
    fill: #111;
}
.rrd-y text {
    font-size: 10px;
    text-anchor: end;
}
.rrd-x text {
    font-size: 10px;
    text-anchor: middle;
}
.rrd-legend text {
    font-size: 11.700px;
}
.rrd .rrd-credit {
    font-size: 8.300px;
    fill: #bbb;
}
.swatch-in {
    fill: #8fae3c;
    stroke: #666;
}
.swatch-out {
    fill: #7f7fbb;
    stroke: #666;
}

/* taskbar */
.taskbar {
    display: flex;
    flex-direction: column;
    gap: 4px;
    width: 104px;
    height: 1200px;
    flex: none;
    padding: 0 1px;
    font-family: "Noto Sans", sans-serif;
    font-size: 11.500px;
    color: #fff;
    background: #05090d;
    border-left: 1px solid #444b52;
}
.orb {
    display: flex;
    align-items: center;
    justify-content: center;
    height: 59px;
    flex: none;
}
.task {
    display: flex;
    align-items: center;
    flex: none;
    height: 28px;
    padding-left: 9px;
    white-space: nowrap;
    overflow: hidden;
    background: linear-gradient(#464d53, #262b30 40%, #14181c 75%, #1c2126);
    border: 1px solid #5f666c;
    border-radius: 3px;
}
.task.active {
    width: 94px;
    background: linear-gradient(#8d9093, #707376 50%, #606366);
    border-color: #d8dadc;
}
.task-group {
    display: flex;
    flex-direction: column;
    flex: none;
    border: 1px solid #5f666c;
    border-radius: 3px;
    overflow: hidden;
}
.task-group.three {
    height: 88px;
}
.task-group.two {
    height: 58px;
}
.task-group .task {
    flex: 1;
    height: auto;
    border: 0;
    border-radius: 0;
    padding-left: 8px;
}
.task-solo {
    display: flex;
    align-items: center;
    justify-content: center;
    height: 28px;
    flex: none;
}
.task-solo .task-icon {
    margin: 0;
}
.task-icon {
    flex: none;
    width: 16px;
    height: 16px;
    margin-right: 6px;
}
.opera .task-icon {
    width: 18px;
    height: 22px;
}
.tray {
    display: flex;
    flex-direction: column;
    margin-top: auto;
    text-align: center;
    line-height: 17px;
}
.tray-arrow {
    width: 0;
    height: 0;
    margin: 0 0 14px 9px;
    border-top: 4px solid transparent;
    border-bottom: 4px solid transparent;
    border-right: 5px solid #fff;
}
.tray-icons {
    display: flex;
    gap: 8px;
    padding-left: 8px;
    margin-bottom: 5px;
}
.tray-icons svg {
    width: 16px;
    height: 16px;
}
.show-desktop {
    height: 13px;
    margin-top: 3px;
    background: linear-gradient(100deg, #4a4f54, #14181c 40%);
    border: 1px solid #777;
}
```
